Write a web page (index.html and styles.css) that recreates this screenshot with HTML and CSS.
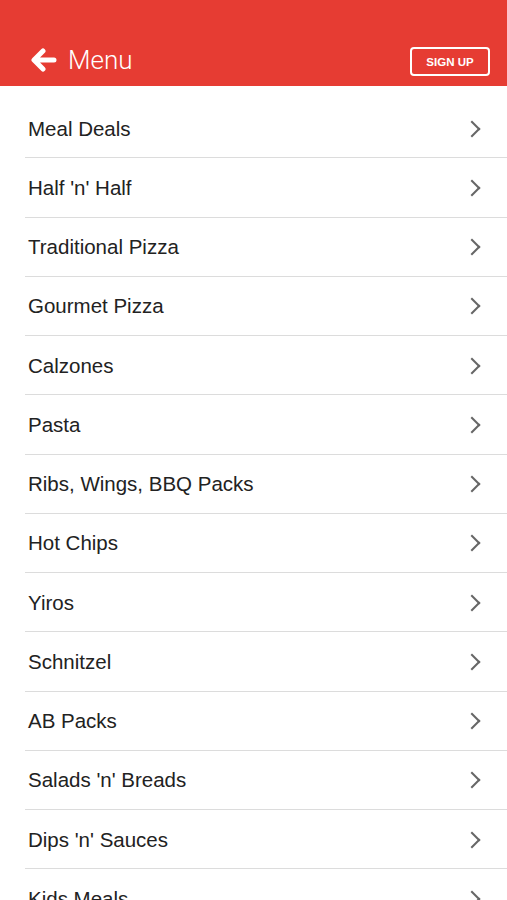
FILE: index.html
```html
<!DOCTYPE html>
<html lang="en">
  <head>
    <meta charset="UTF-8" />
    <meta name="viewport" content="width=device-width, initial-scale=1.0" />
    <title>Menu</title>
    <link rel="stylesheet" href="styles.css">
  </head>
  <body>
    <header class="topbar">
      <div class="title">
        <svg class="back" width="26" height="24" viewBox="0 0 26 24">
          <path d="M12 3 L3 12 L12 21 M4 12 L23 12" fill="none" stroke="#fff" stroke-width="5" stroke-linecap="round" stroke-linejoin="round" />
        </svg>
        <span>Menu</span>
      </div>
      <button class="signup">SIGN UP</button>
    </header>

    <ul class="menu">
      <li>Meal Deals</li>
      <li>Half 'n' Half</li>
      <li>Traditional Pizza</li>
      <li>Gourmet Pizza</li>
      <li>Calzones</li>
      <li>Pasta</li>
      <li>Ribs, Wings, BBQ Packs</li>
      <li>Hot Chips</li>
      <li>Yiros</li>
      <li>Schnitzel</li>
      <li>AB Packs</li>
      <li>Salads 'n' Breads</li>
      <li>Dips 'n' Sauces</li>
      <li>Kids Meals</li>
    </ul>
  </body>
</html>
```

FILE: styles.css
```css
* {
  margin: 0;
  padding: 0;
  box-sizing: border-box;
}

body {
  background: #fff;
  font-family: "Liberation Sans", Arial, sans-serif;
  overflow: hidden;
}

.topbar {
  background-color: #e63c33;
  height: 86px;
  display: flex;
  align-items: flex-end;
  justify-content: space-between;
  padding: 0 17px 10px 31px;
}

.title {
  display: flex;
  align-items: center;
  gap: 11px;
  color: #fff;
  margin-bottom: 1px;
}

.title span {
  font-family: Roboto, "Liberation Sans", sans-serif;
  font-weight: 300;
  font-size: 26px;
  line-height: 30px;
}

.back {
  display: block;
}

.signup {
  background: transparent;
  border: 2px solid #fff;
  border-radius: 4px;
  color: #fff;
  font-family: "Liberation Sans", Arial, sans-serif;
  font-weight: bold;
  font-size: 11.5px;
  width: 80px;
  height: 29px;
}

.menu {
  list-style: none;
  padding-top: 13px;
}

.menu li {
  margin-left: 25px;
  height: 59.25px;
  border-bottom: 1px solid #dcdcdc;
  padding: 1px 25px 0 3px;
  display: flex;
  align-items: center;
  justify-content: space-between;
  font-size: 20.5px;
  color: #222;
}

.menu li::after {
  content: "";
  width: 10px;
  height: 10px;
  border-right: 2px solid #666;
  border-top: 2px solid #666;
  transform: rotate(45deg);
  margin-right: 4px;
}
```
